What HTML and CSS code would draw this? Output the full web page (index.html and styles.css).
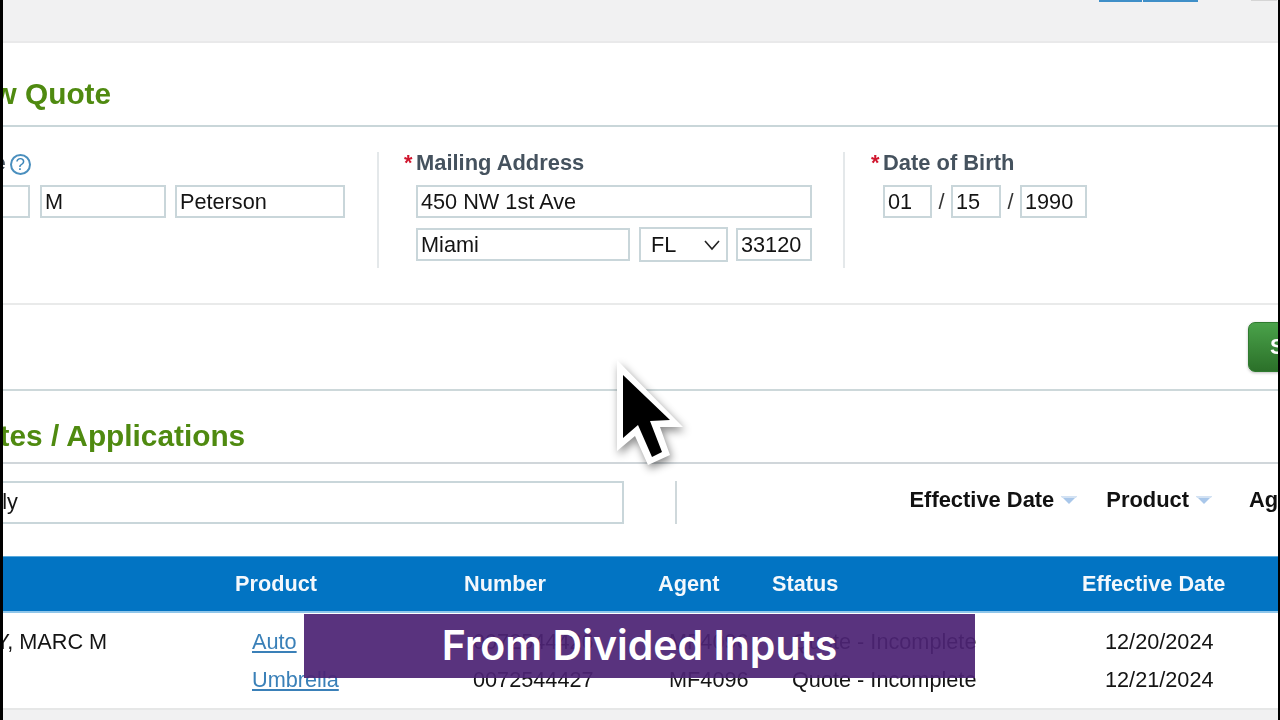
FILE: index.html
```html
<!DOCTYPE html>
<html lang="en">
<head>
<meta charset="utf-8">
<title>New Quote</title>
<link rel="stylesheet" href="styles.css">
</head>
<body>
<div class="screen">
  <div class="page">
    <header class="topbar">
      <span class="toplink a"></span>
      <span class="toplink b"></span>
      <span class="topmark"></span>
    </header>

    <section class="title-row first">
      <h1 class="title new-quote">New Quote</h1>
    </section>

    <section class="form-row">
      <div class="col name-col">
        <div class="label-line name-label">
          <span class="label">Name</span>
          <span class="help">?</span>
        </div>
        <div class="fields">
          <input class="field first-name" value="">
          <input class="field middle" value="M">
          <input class="field last" value="Peterson">
        </div>
      </div>
      <div class="col addr-col">
        <div class="label-line"><span class="star">*</span><span class="label">Mailing Address</span></div>
        <div class="fields indent">
          <input class="field street" value="450 NW 1st Ave">
        </div>
        <div class="fields indent second">
          <input class="field city" value="Miami">
          <div class="select"><span>FL</span>
            <svg class="chev" width="18" height="12" viewBox="0 0 18 12"><path d="M2 2l7 8 7-8" fill="none" stroke="#222" stroke-width="1.6"/></svg>
          </div>
          <input class="field zip" value="33120">
        </div>
      </div>
      <div class="col dob-col">
        <div class="label-line"><span class="star">*</span><span class="label">Date of Birth</span></div>
        <div class="fields indent dob">
          <input class="field mm" value="01">
          <span class="slash">/</span>
          <input class="field dd" value="15">
          <span class="slash">/</span>
          <input class="field yy" value="1990">
        </div>
      </div>
    </section>

    <section class="action-row">
      <button class="go">Save</button>
    </section>

    <section class="title-row second-title">
      <h2 class="title apps">Quotes / Applications</h2>
    </section>

    <section class="filter-row">
      <input class="search" value="Family">
      <span class="vline"></span>
      <span class="sort eff">Effective Date</span>
      <svg class="tri" width="16" height="8" viewBox="0 0 16 8"><polygon points="0,0 16,0 8,8" fill="#a9c7ea"/><polygon points="0,0 16,0 15,2 1,2" fill="#d3e2f3"/></svg>
      <span class="sort prod">Product</span>
      <svg class="tri" width="16" height="8" viewBox="0 0 16 8"><polygon points="0,0 16,0 8,8" fill="#a9c7ea"/><polygon points="0,0 16,0 15,2 1,2" fill="#d3e2f3"/></svg>
      <span class="sort ag">Agent</span>
    </section>

    <section class="table">
      <div class="thead">
        <span></span><span>Product</span><span>Number</span><span>Agent</span><span>Status</span><span>Effective Date</span>
      </div>
      <div class="tbody">
        <span class="insured">Y, MARC M</span><a class="lnk">Auto</a><span>0072544426</span><span>MF4096</span><span>Quote - Incomplete</span><span>12/20/2024</span>
        <span></span><a class="lnk">Umbrella</a><span>0072544427</span><span>MF4096</span><span>Quote - Incomplete</span><span>12/21/2024</span>
      </div>
    </section>

    <footer class="foot"></footer>
  </div>

  <div class="caption">From Divided Inputs</div>

  <svg class="cursor" width="90" height="130" viewBox="0 0 90 130">
    <polygon points="7,10 73,77 50,77 60,105 38,115 25,86 7,101" fill="#fff"/>
    <polygon points="13,25 60,70 40,71 52,102 42,107 28,75 13,88" fill="#000"/>
  </svg>
</div>
</body>
</html>
```
FILE: styles.css
```css
* { box-sizing: border-box; }
html, body { margin: 0; padding: 0; background: #000; }
body { font-family: "Liberation Sans", Arial, sans-serif; color: #111; }

.screen {
  position: relative;
  width: 1280px;
  height: 720px;
  overflow: hidden;
  background: #fff;
  border-left: 3px solid #000;
  border-right: 2px solid #000;
}
.page {
  display: flex;
  flex-direction: column;
  height: 720px;
  filter: blur(0.45px);
}

.topbar {
  flex: none;
  height: 43px;
  display: flex;
  align-items: flex-start;
  background: #f1f1f2;
  border-bottom: 2px solid #e9e9ea;
  padding-left: 1096px;
}
.toplink { height: 2px; background: #3f8fc8; }
.toplink.a { width: 43px; margin-right: 1px; }
.toplink.b { width: 55px; }
.topmark { width: 26px; height: 1px; margin-left: 53px; background: #d5d5d5; }

.title-row { flex: none; display: flex; align-items: center; }
.title-row.first { height: 84px; border-bottom: 2px solid #c9d6d9; }
.title-row.second-title { height: 73px; border-bottom: 2px solid #d0d6da; }
.title {
  margin: 0;
  font-size: 29.8px;
  font-weight: 700;
  color: #4f8a10;
  white-space: nowrap;
  flex: none;
}
.new-quote { margin-left: -47.5px; margin-top: 20px; }
.apps { margin-left: -63px; margin-top: 18px; }

.form-row {
  flex: none;
  height: 178px;
  display: flex;
  align-items: flex-start;
  padding-top: 25px;
  border-bottom: 2px solid #e9eaea;
}
.col { flex: none; height: 116px; }
.name-col { width: 376px; border-right: 2px solid #e4e8ea; }
.addr-col { width: 466px; padding-left: 25px; border-right: 2px solid #e4e8ea; }
.dob-col { flex: 1; padding-left: 26px; }

.label-line {
  display: flex;
  align-items: center;
  height: 22px;
  margin-bottom: 11px;
  white-space: nowrap;
}
.label { font-size: 21.9px; font-weight: 700; color: #45525e; flex: none; }
.star { width: 12px; flex: none; color: #d0152d; font-size: 21.7px; font-weight: 700; line-height: 22px; }
.name-label { margin-left: -57px; }
.help {
  flex: none;
  width: 21px;
  height: 21px;
  margin-left: 4px;
  margin-top: 2px;
  border: 2px solid #4a8fbe;
  border-radius: 50%;
  color: #3d86b8;
  font-size: 17px;
  font-weight: 400;
  line-height: 17px;
  text-align: center;
}

.fields { display: flex; align-items: center; }
.indent { margin-left: 12px; }
.second { margin-top: 9px; }

.field {
  flex: none;
  display: block;
  height: 33px;
  margin: 0;
  padding: 0 3px;
  border: 2px solid #c9d6da;
  border-radius: 0;
  background: #fff;
  color: #141414;
  font: 21.7px "Liberation Sans", Arial, sans-serif;
  outline: none;
}
.first-name { width: 60px; margin-left: -33px; }
.middle { width: 126px; margin-left: 10px; }
.last { width: 170px; margin-left: 9px; }
.street { width: 396px; }
.city { width: 214px; }
.select {
  flex: none;
  width: 89px;
  height: 35px;
  margin-left: 9px;
  padding: 0 5px 0 10px;
  border: 2px solid #c9d6da;
  display: flex;
  align-items: center;
  justify-content: space-between;
  font-size: 21.7px;
  color: #141414;
}
.zip { width: 76px; margin-left: 8px; }
.mm { width: 49px; }
.dd { width: 50px; }
.yy { width: 67px; }
.slash { flex: none; width: 19px; text-align: center; font-size: 21.7px; color: #333; }

.action-row {
  flex: none;
  height: 86px;
  display: flex;
  justify-content: flex-end;
  padding-top: 17px;
  border-bottom: 2px solid #cdd8da;
}
.go {
  flex: none;
  width: 100px;
  height: 50px;
  margin: 0 -70px 0 0;
  padding: 0 0 0 21px;
  border: 1px solid #2f7a2f;
  border-radius: 7px;
  background: linear-gradient(#4aa24a, #2b7029);
  box-shadow: 0 1px 3px rgba(0, 0, 0, .25);
  color: #fff;
  font: 700 21.7px "Liberation Sans", Arial, sans-serif;
  text-align: left;
}

.filter-row {
  flex: none;
  height: 92px;
  display: flex;
  align-items: center;
  padding-bottom: 16px;
  white-space: nowrap;
}
.search {
  flex: none;
  width: 681px;
  height: 43px;
  margin: 0 0 0 -60px;
  padding: 0 0 0 9px;
  border: 2px solid #c9d6da;
  border-radius: 0;
  background: #fff;
  color: #141414;
  font: 21.7px "Liberation Sans", Arial, sans-serif;
  outline: none;
}
.vline { flex: none; width: 2px; height: 43px; margin-left: 51px; background: #cfd8db; }
.sort { flex: none; font-size: 21.9px; font-weight: 700; color: #111; margin-bottom: 4px; }
.eff { margin-left: 232.5px; }
.prod { margin-left: 29px; }
.ag { margin-left: 37px; }
.tri { flex: none; margin-left: 7px; margin-bottom: 4px; }

.thead {
  height: 57px;
  display: grid;
  grid-template-columns: 232px 229px 194px 114px 310px auto;
  align-items: center;
  background: #0274c3;
  border-top: 1px solid #58a9dc;
  border-bottom: 2px solid #8fc6ea;
  color: #f4f8fc;
  font-size: 21.7px;
  font-weight: 700;
  white-space: nowrap;
}
.tbody {
  height: 97px;
  padding-top: 10px;
  display: grid;
  grid-template-columns: 249px 221px 196px 123px 313px auto;
  grid-auto-rows: 38px;
  align-items: center;
  font-size: 21.7px;
  white-space: nowrap;
  color: #141414;
  border-bottom: 2px solid #e6e7e7;
}
.insured { margin-left: -7.5px; }
.lnk { color: #3a80b8; text-decoration: underline; }

.foot { flex: 1; background: #f1f1f2; }

.caption {
  position: absolute;
  left: 301px;
  top: 614px;
  width: 671px;
  height: 64px;
  display: flex;
  align-items: center;
  justify-content: center;
  padding-bottom: 3px;
  background: rgba(76, 36, 116, .93);
  color: #fff;
  font: 600 41px Inter, "Noto Sans", sans-serif;
  white-space: nowrap;
}

.cursor {
  position: absolute;
  left: 607px;
  top: 350px;
  filter: drop-shadow(2px 4px 4px rgba(0, 0, 0, .45));
}
```
